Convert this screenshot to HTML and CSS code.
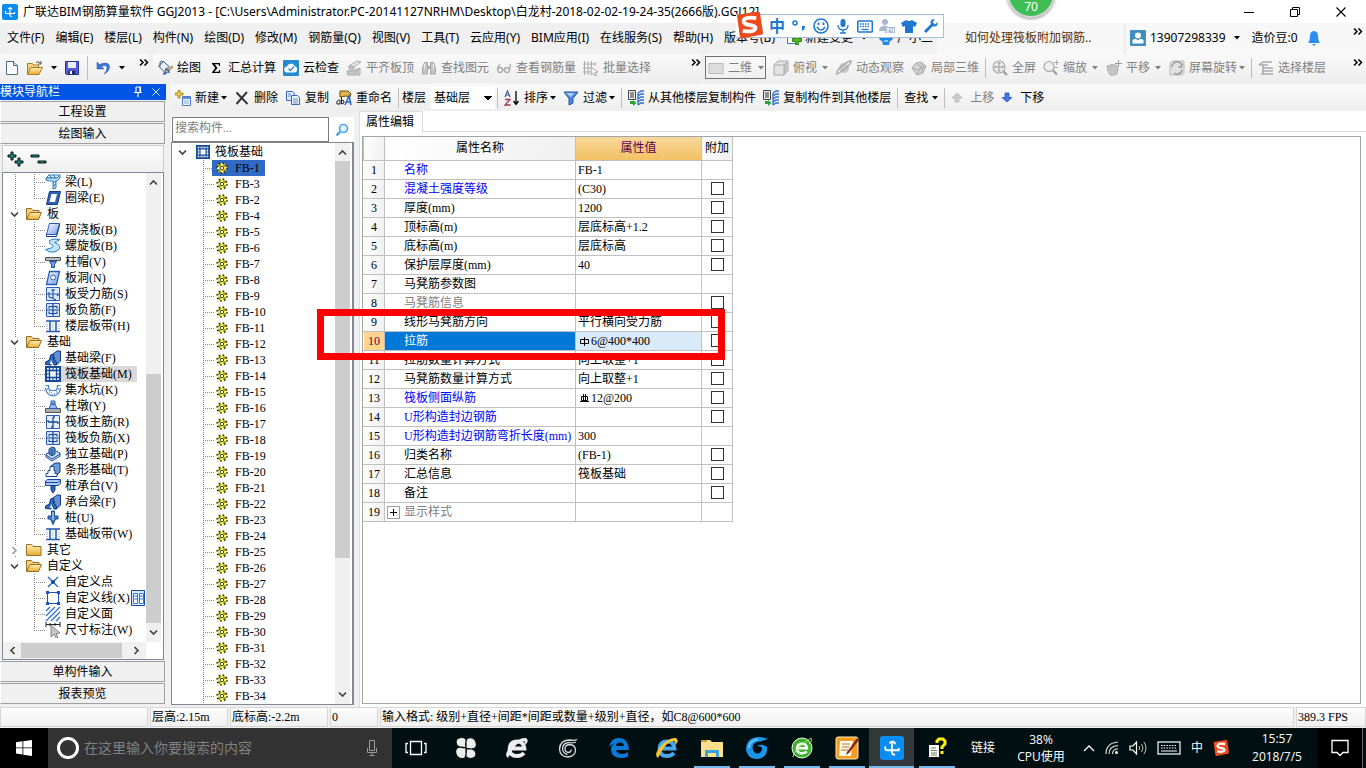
FILE: index.html
```html
<!DOCTYPE html>
<html lang="zh-CN">
<head>
<meta charset="utf-8">
<title>广联达BIM钢筋算量软件 GGJ2013</title>
<link rel="stylesheet" href="styles.css">
</head>
<body>
<svg class="defs" aria-hidden="true">
<defs>
<linearGradient id="gb" x1="0" y1="0" x2="1" y2="1"><stop offset="0" stop-color="#fff"/><stop offset="1" stop-color="#6d9df0"/></linearGradient>
<linearGradient id="gy" x1="0" y1="0" x2="0" y2="1"><stop offset="0" stop-color="#fff0b8"/><stop offset="1" stop-color="#e9ac2c"/></linearGradient>
</defs>
<symbol id="app" viewBox="0 0 16 16"><rect width="16" height="16" rx="2" fill="#0a8df2"/><path d="M6.500 5a1.800 1.800 0 0 1 3.500 .5M8 4v6M3.500 7v1.500q0 1 1.500 1h7.500V8M8 9.500V11q0 1.500 2 1.500" fill="none" stroke="#fff" stroke-width="1.200"/></symbol>
<symbol id="caret" viewBox="0 0 6 4"><path d="M0 0h6L3 3.500z" fill="currentColor"/></symbol>
<symbol id="more" viewBox="0 0 10 7"><path d="M1 .5l3 3-3 3M5.500 .5l3 3-3 3" fill="none" stroke="#000" stroke-width="1.500"/></symbol>
<symbol id="newdoc" viewBox="0 0 16 16"><path d="M2.500 1.500h7l4 4v9h-11z" fill="#fff" stroke="#4a6a9c"/><path d="M9.500 1.500v4h4" fill="#cfe0f5" stroke="#4a6a9c"/></symbol>
<symbol id="open" viewBox="0 0 16 16"><path d="M.5 14V3.500h5l1 1.500h5v3" fill="#f6d47c" stroke="#a77a22"/><path d="M.5 14.500l3-7h12l-3.500 7z" fill="url(#gy)" stroke="#a77a22"/><path d="M9 2.500q3-2 5 1m0-2.500v3h-3" fill="none" stroke="#555"/></symbol>
<symbol id="save" viewBox="0 0 16 16"><path d="M1.500 1.500h13v13h-12l-1-1z" fill="#5560d8" stroke="#2a2f8c"/><path d="M4 2h8v6H4z" fill="#e8ecff"/><path d="M4.500 10.500h7V14h-7z" fill="#23277c"/><path d="M6 11h2v3H6z" fill="#fff"/></symbol>
<symbol id="undo" viewBox="0 0 16 16"><path d="M2 2v7h7L6.500 6.500Q12 4 12 8q0 3-3 6 6-3 5.500-8Q13 1 4.500 4.500z" fill="#3e76d8" stroke="#2756ab" stroke-width=".5"/></symbol>
<symbol id="paint" viewBox="0 0 16 16"><path d="M1.500 6l5-4.500 5.500 5-5 5z" fill="#e9f0fb" stroke="#33557f"/><path d="M3 6.500V3q0-2 1.500-2T6 3" fill="none" stroke="#33557f"/><path d="M14.500 6l1.500 1-6 6-2-1z" fill="#f2b04a" stroke="#8c5a15" stroke-width=".6"/><path d="M6 15q0-3.500 2.500-3.500L10 13q-1 2-4 2z" fill="#2d6bc8"/><path d="M8 9q4 0 4 4" fill="none" stroke="#2d6bc8" stroke-width="1.500"/></symbol>
<symbol id="sigma" viewBox="0 0 16 16"><path d="M4 3h8v3h-.7L10.500 4.300H6.800L9.500 8l-3.300 3.700h4.500L11.500 10h.7v3H4v-.8L7.300 8 4 3.800z" fill="#000"/></symbol>
<symbol id="cloud" viewBox="0 0 16 16"><rect width="16" height="16" rx="1" fill="#2389d0"/><path d="M4.500 12.500a3 3 0 0 1-.5-6 4 4 0 0 1 7.500-.5 3.300 3.300 0 0 1 0 6.500z" fill="#fff"/><path d="M5.500 8.500l2 2 3.500-4" fill="none" stroke="#2389d0" stroke-width="1.300"/></symbol>
<symbol id="align" viewBox="0 0 16 16"><path d="M3 6l8-5 4 1-7 5z" fill="#e4e4e4" stroke="#aaa"/><path d="M3 6v3l3 2 2-4zM1 11h6l3-2v6H2z" fill="#c6c6c6" stroke="#aaa"/><path d="M11 15V9l3-1v7z" fill="#ccc" stroke="#aaa"/></symbol>
<symbol id="binoc" viewBox="0 0 16 16"><path d="M1.500 14V8l2-5.500h3V14zM14.500 14V8l-2-5.500h-3V14z" fill="#c4c4c4" stroke="#a5a5a5"/><path d="M6.500 6h3v3h-3z" fill="#aaa"/><path d="M3.500 4v5M12.500 4v5" stroke="#eee"/></symbol>
<symbol id="glasses" viewBox="0 0 16 16"><circle cx="4" cy="10" r="2.500" fill="#eee" stroke="#aaa" stroke-width="1.300"/><circle cx="11" cy="10" r="2.500" fill="#eee" stroke="#aaa" stroke-width="1.300"/><path d="M1.500 10Q1 7 4 4.500M13.500 10l1-6M6.500 10h2" fill="none" stroke="#aaa" stroke-width="1.300"/></symbol>
<symbol id="batch" viewBox="0 0 16 16"><path d="M1.500 1v14M5 1v14M8.500 1v7M0 4h12M0 8h8M0 12h9M12 2v4" stroke="#aaa" fill="none"/><path d="M8 7l7 5-3 .5 1.500 3-1.500.5-1.500-3L8 15z" fill="#f4f4f4" stroke="#999" stroke-width=".8"/></symbol>
<symbol id="plane" viewBox="0 0 16 16"><rect x="1" y="3.500" width="14" height="10" fill="#dcdcdc" stroke="#bbb"/></symbol>
<symbol id="cube" viewBox="0 0 16 16"><path d="M1 5l4-4h10v10l-4 4H1z" fill="#e2e2e2" stroke="#aaa"/><path d="M11 5l4-4v10l-4 4z" fill="#c4c4c4"/><path d="M1 5h10v10M11 5l4-4" fill="none" stroke="#aaa"/></symbol>
<symbol id="orbit" viewBox="0 0 16 16"><circle cx="8" cy="8" r="5" fill="#c9c9c9"/><path d="M1 14Q0 11 6 6t9-5q1 2-5 7t-9 6z" fill="none" stroke="#a8a8a8" stroke-width="1.500"/></symbol>
<symbol id="local" viewBox="0 0 16 16"><path d="M1 8l4-5 5-1 5 4-3 7-6 2z" fill="#d5d5d5" stroke="#aaa"/><path d="M5 3l5 4-4 8M1 8l6 2 8-4M10 2l2 5-2 7" fill="none" stroke="#aaa"/></symbol>
<symbol id="full" viewBox="0 0 16 16"><circle cx="7" cy="7" r="6" fill="#efefef" stroke="#aaa" stroke-width="1.200"/><path d="M7 2.500v9M2.500 7h9M5.500 4L7 2.500 8.500 4M5.500 10L7 11.500 8.500 10M4 5.500L2.500 7 4 8.500M10 5.500L11.500 7 10 8.500" fill="none" stroke="#999"/><path d="M11.500 11.500L15 15" stroke="#999" stroke-width="2.200"/></symbol>
<symbol id="zoomi" viewBox="0 0 16 16"><circle cx="6" cy="6.500" r="5" fill="#efefef" stroke="#aaa" stroke-width="1.200"/><path d="M10 10.500l4 4" stroke="#999" stroke-width="2.200"/><path d="M13.500 0v5M11 2.500h5M11 7.500h4" stroke="#aaa"/></symbol>
<symbol id="pan" viewBox="0 0 16 16"><path d="M1 6q1-1.500 3 1V5q1-1.500 2 0 1-1.500 2.500 0Q10 4 11 6l1 3-1 5q-4 2-7 1-3-4-3-9z" fill="#c4c4c4" stroke="#b0b0b0"/><path d="M12.500 0v7M9 3.500h7" stroke="#999"/></symbol>
<symbol id="rot" viewBox="0 0 16 16"><path d="M1 3l2-2h12v12l-2 2H1z" fill="#e2e2e2" stroke="#bbb"/><path d="M3 7a5 5 0 0 1 10-.5v-3M13 7h-3.500M13 10a5 5 0 0 1-8 3" fill="none" stroke="#999" stroke-width="1.500"/></symbol>
<symbol id="floors" viewBox="0 0 16 16"><path d="M1 5l4-3h9M1 5h9M4 8h11M4 11h11M3 14h12M5 5v9" stroke="#aaa" stroke-width="1.500" fill="none"/></symbol>
<symbol id="create" viewBox="0 0 16 16"><path d="M3 0h2v3h3v2H5v3H3V5H0V3h3z" fill="#f8d648" stroke="#8a6a10" stroke-width=".7"/><path d="M7.500 6.500h8v9h-8z" fill="#f2f7ff" stroke="#4b76c0"/><path d="M7.500 7h8v2h-8z" fill="#5c8ade"/><path d="M9 11h5M9 13h5" stroke="#89a9e0"/></symbol>
<symbol id="del" viewBox="0 0 16 16"><path d="M2.500 2.500l11 11.500M13 2L2.500 14" stroke="#333" stroke-width="1.900" fill="none"/></symbol>
<symbol id="copy" viewBox="0 0 16 16"><path d="M1.500 1.500h6l2 2v7h-8z" fill="#dce9ff" stroke="#3f68ba"/><path d="M6.500 5.500h6l2 2v7h-8z" fill="#e9f1ff" stroke="#3f68ba"/><path d="M8 9h5M8 11h5M8 13h5M3 4h3M3 6h3" stroke="#6e92da"/></symbol>
<symbol id="rename" viewBox="0 0 16 16"><path d="M4 1h8l3 3-1 3-4-1-6 1z" fill="#e5b54a" stroke="#6e5112"/><path d="M1 14q-1-4 3-4v4H1M5.500 7v7q3 0 2.500-3-1-1.500-2.500 0" fill="none" stroke="#222"/><path d="M9 15l4-9 2 9M10.500 12h4" fill="none" stroke="#2b62c9" stroke-width="1.500"/></symbol>
<symbol id="sort" viewBox="0 0 16 16"><path d="M1 7l2.500-6L6 7M2 5h3" fill="none" stroke="#3b5a96" stroke-width="1.200"/><path d="M1 9.500h5L1 15h5.500" fill="none" stroke="#a33a44" stroke-width="1.300"/><path d="M12 1v13M9.500 11l2.500 3.500 2.500-3.500" stroke="#000" fill="none" stroke-width="1.300"/></symbol>
<symbol id="filter" viewBox="0 0 16 16"><path d="M1 2h14L10 8.500V13l-4 2V8.500z" fill="#4d87e8" stroke="#2254a8"/><path d="M3 3h8L8 7z" fill="#b5d0fa"/></symbol>
<symbol id="fcopy" viewBox="0 0 16 16"><path d="M.5 .5h7v9h-7z" fill="#eee" stroke="#444"/><path d="M2 3h4M2 5h4M2 7h4" stroke="#333"/><path d="M10 3l3-2h3M10 6l3-2h3M10 9l3-2h3M10 12l3-2h3M10 15l3-2h3M10 3v12" stroke="#2f6ccf" stroke-width="1.300" fill="none"/><path d="M2 11v3h3v2l3.500-3L5 10v1z" fill="#26a53c"/></symbol>
<symbol id="up" viewBox="0 0 12 12"><path d="M6 1l5 5H8v4H4V6H1z" fill="#ccc" stroke="#aaa" stroke-width=".6"/></symbol>
<symbol id="down" viewBox="0 0 12 12"><path d="M6 10L1 5.500h3V1h4v4.500h3z" fill="#4377e6" stroke="#1d46a5" stroke-width=".7"/></symbol>
<symbol id="plusdoc" viewBox="0 0 16 16"><path d="M1.500 1.500h10v12h-10z" fill="#fff" stroke="#3f78b5"/><path d="M9.500 5.500h3v3h3v3h-3v3h-3v-3h-3v-3h3z" fill="#52b61e" stroke="#2f8010"/></symbol>
<symbol id="robot" viewBox="0 0 16 16"><rect x="1" y="2" width="14" height="9" rx="4" fill="#1b88e6"/><path d="M4 10h8l-1 5H5z" fill="#1b88e6"/><circle cx="5.500" cy="6.500" r="1.300" fill="#fff"/><circle cx="10.500" cy="6.500" r="1.300" fill="#fff"/><path d="M6 11h4" stroke="#fff"/></symbol>
<symbol id="avatar" viewBox="0 0 16 16"><rect width="16" height="16" rx="1" fill="#3d8fbf"/><circle cx="8" cy="5.500" r="3" fill="#fff"/><path d="M2.500 13.500V10q2-1.500 3.500-1l2 1.500L10 9q2-.5 3.500 1v3.500z" fill="#fff"/></symbol>
<symbol id="bell" viewBox="0 0 14 16"><path d="M7 1q4 .5 4 5 0 5 2 7H1q2-2 2-7 0-4.500 4-5z" fill="#2b8df5"/><path d="M5 14h4l-2 2z" fill="#2b8df5"/></symbol>
<symbol id="folder" viewBox="0 0 16 14"><path d="M.5 12.500v-11h5l1.500 2h8v9z" fill="url(#gy)" stroke="#96702a"/></symbol>
<symbol id="folderopen" viewBox="0 0 16 14"><path d="M.5 12V1.500h5l1.500 2h6v3" fill="#f5d27a" stroke="#96702a"/><path d="M.5 12.500l3.500-7h11.500l-3 7z" fill="url(#gy)" stroke="#96702a"/></symbol>
<symbol id="chev" viewBox="0 0 9 9"><path d="M1 2.500L4.500 6 8 2.500" fill="none" stroke="#444" stroke-width="1.700"/></symbol>
<symbol id="chevr" viewBox="0 0 9 9"><path d="M2.500 1L6 4.500 2.500 8" fill="none" stroke="#999" stroke-width="1.500"/></symbol>
<symbol id="beam" viewBox="0 0 16 16"><path d="M1 4l3-3h11l-3 3z" fill="#e7f2fd" stroke="#2a7ab8"/><path d="M1 4h11l3-3v3l-3 3h-1v7l-3 1V7H5L1 6z" fill="#bcdcf7" stroke="#2a7ab8"/><path d="M4 1l3 3M8 1l3 3M8 9l3-2M8 12l3-2" stroke="#2a7ab8"/></symbol>
<symbol id="ring" viewBox="0 0 16 16"><path d="M4.500 1.500h11l-3 13h-11z" fill="#2f60b5" stroke="#123c85"/><path d="M6.500 4h5.500l-2 8H4.500z" fill="#fff"/></symbol>
<symbol id="slab" viewBox="0 0 16 16"><path d="M4.500 1.500h10l-3 11h-10z" fill="url(#gb)" stroke="#2b5cae"/><path d="M1.500 12.500v2h10l3-11v-2" fill="none" stroke="#123c85"/></symbol>
<symbol id="spiral" viewBox="0 0 16 16"><path d="M15 1.500Q8 0 4.500 2.500 3 5 7 7q3 1.500-1 3L.5 11.500Q4 15 9 14q7-2 5.500-6-1-2-5-3.500 2-.5 5.500-3z" fill="#c4e5fb" stroke="#2781c9"/></symbol>
<symbol id="cap" viewBox="0 0 16 16"><path d="M.5 3.500h15v3H.5z" fill="#b9bec4" stroke="#555"/><path d="M4.500 7.500h7l-2 3v3h-3v-3z" fill="#6fa0e5" stroke="#1c4f9f"/></symbol>
<symbol id="hole" viewBox="0 0 16 16"><path d="M4.500 1.500h10l-3 13h-10z" fill="url(#gb)" stroke="#2b5cae" stroke-width="1.300"/><circle cx="8" cy="7.500" r="2.500" fill="#fff" stroke="#2b5cae"/></symbol>
<symbol id="rebar0" viewBox="0 0 16 16"><path d="M1.500 1.500h13v13h-13z" fill="#dfe9fb" stroke="#2b5cae"/><path d="M8 3v9q0 1.500 3 1.500M2 8h12M6 4h4M4 6v4q0 2 4 2M12 10l2-2" fill="none" stroke="#2b5cae" stroke-width="1.200"/></symbol>
<symbol id="rebar1" viewBox="0 0 16 16"><path d="M1.500 1.500h13v13h-13z" fill="#e5eefc" stroke="#2b5cae"/><path d="M8 3v10h-2M8 3h2M3 8h10M3 8v-2M13 8v2" fill="none" stroke="#174a96" stroke-width="1.300"/></symbol>
<symbol id="rebar2" viewBox="0 0 16 16"><path d="M1.500 1.500h13v13h-13z" fill="#d5e3fa" stroke="#2b5cae"/><path d="M8 1v13M4 4.500h8M4 11.500h8M2 8h12M4 4.500v2M12 4.500v2M4 9.500v2M12 9.500v2" fill="none" stroke="#174a96" stroke-width="1.200"/></symbol>
<symbol id="strip" viewBox="0 0 16 16"><path d="M1 3h14M1 13.500h14" stroke="#1c55b3" stroke-width="1.500"/><path d="M5 3v10M11 3v10" stroke="#1c55b3" stroke-width="1.500"/><path d="M2 6v6M8 5v7M14 6v6" stroke="#6e98d8" stroke-dasharray="1 1"/></symbol>
<symbol id="fbeam" viewBox="0 0 16 16"><path d="M8 4l4-3h3.500v10l-4 4z" fill="#5f8fd1" stroke="#123c85"/><path d="M.5 14.500v-2.500l4-2 1-5 3-1v6l3 2v3H9l-1.500-3-1.500 3z" fill="#2f69b8" stroke="#123c85"/><path d="M5 14l1-4 2 4" fill="#fff"/></symbol>
<symbol id="raft" viewBox="0 0 16 16"><path d="M1 1h14v14H1z" fill="#e9f1fc" stroke="#174a96" stroke-width="2"/><path d="M4.500 1v14M11.500 1v14M1 4.500h14M1 11.500h14" stroke="#174a96" stroke-width="1.300"/><path d="M8 1v3M8 12v3M1 8h3M12 8h3" stroke="#174a96"/><path d="M6 6h4v4H6z" fill="#fff"/></symbol>
<symbol id="pit" viewBox="0 0 16 16"><path d="M.5 3.500h3q0 5 2.500 5h4q2.500 0 2.500-5h3M.5 6q1 7 7.500 8 6.500-1 7.500-8" fill="none" stroke="#3d80cd" stroke-width="1.200"/><path d="M2 7h1M4 10h1M6 11h1M9 12h1M11 10h1M13 7h1M7 13h1" stroke="#174a96"/></symbol>
<symbol id="pier" viewBox="0 0 16 16"><path d="M.5 10.500h15v4H.5z" fill="#a8adb3" stroke="#555"/><path d="M6 6h4l2 4.500H4zM6 3h4v3H6z" fill="#96bcf0" stroke="#2b5cae"/></symbol>
<symbol id="iso" viewBox="0 0 16 16"><path d="M1 8l8-4 6 3v3l-8 5-6-4z" fill="#cfe1f7" stroke="#174a96"/><path d="M4 8V3l3-2 3 1v6l-3 2z" fill="#5686c4" stroke="#174a96"/><path d="M1 9l6 4 8-5M7 3v7" fill="none" stroke="#174a96"/></symbol>
<symbol id="stripf" viewBox="0 0 16 16"><path d="M6 4l4-3h5v9l-4 4z" fill="#6f9bd5" stroke="#123c85"/><path d="M1 14.500v-3h2v-3h2v-4h4v4h1v3h2v3z" fill="#fff" stroke="#174a96"/></symbol>
<symbol id="pilecap" viewBox="0 0 16 16"><path d="M.5 3l2-1.500h13v4L13 7.500H.5z" fill="#aacaf5" stroke="#174a96"/><path d="M6 8h4v4l-2 3-2-3z" fill="#2c69bd" stroke="#123c85"/><path d="M1 4.500h12l2-2" stroke="#174a96" fill="none"/></symbol>
<symbol id="pile" viewBox="0 0 16 16"><path d="M6.500 1h3v5h3.500v3h-2.500L8 14.500 5.500 9H3V6h3.500z" fill="#3f79c6" stroke="#174a96"/><path d="M8 2v8" stroke="#d5e5fa" stroke-width="1.200"/></symbol>
<symbol id="cpoint" viewBox="0 0 16 16"><path d="M3 3l10 10M13 3L3 13" stroke="#2268c4" stroke-width="1.300"/><circle cx="8" cy="8" r="2" fill="#174a96"/></symbol>
<symbol id="cline" viewBox="0 0 16 16"><path d="M2.500 2.500h11v11h-11z" fill="none" stroke="#1c55c3"/><path d="M1 1h3v3H1zM12 1h3v3h-3zM1 12h3v3H1zM12 12h3v3h-3z" fill="#1c55c3"/></symbol>
<symbol id="cface" viewBox="0 0 16 16"><path d="M1 5l4-4M1 10l9-9M1 15L15 1M6 15l9-9M11 15l4-4" stroke="#2f6cd0" stroke-width="1.200"/></symbol>
<symbol id="dim" viewBox="0 0 16 16"><path d="M1 0v5M15 0v5M1 2.500h14M5 1v3M10 1v3" stroke="#222"/><path d="M6 3l9 8-4 .5 2 4-2 .5-2-4-3 3z" fill="#c5c5c5" stroke="#888"/></symbol>
<symbol id="gear" viewBox="0 0 12 12"><circle cx="6" cy="6" r="5" fill="#fff94a" stroke="#222" stroke-width="1.400" stroke-dasharray="1.600 2.327"/><path d="M2 4h2v-2M8 2v2h2M10 8h-2v2M4 10v-2h-2" fill="none" stroke="#333" stroke-width=".8"/><circle cx="6" cy="6" r="1.700" fill="#fff" stroke="#222" stroke-width=".9"/></symbol>
<symbol id="mag" viewBox="0 0 14 14"><path d="M1.500 12.500L5 9" stroke="#3f9be0" stroke-width="2.400"/><circle cx="8.500" cy="5.500" r="4" fill="#e0f3fe" stroke="#4aaaea" stroke-width="1.700"/></symbol>
<symbol id="expand" viewBox="0 0 18 16"><path d="M4 1h2v3h3v2H6v3H4V6H1V4h3z" fill="#0e9a8c" stroke="#111"/><path d="M11 7h2v3h3v2h-3v3h-2v-3H8v-2h3z" fill="#0e9a8c" stroke="#111"/></symbol>
<symbol id="collapse" viewBox="0 0 18 16"><path d="M1 4h8v2H1zM8 10h8v2H8z" fill="#0e9a8c" stroke="#111"/></symbol>
<symbol id="pin" viewBox="0 0 10 12"><path d="M3 1h4.500v5M3 1v5M7 1v5M1 6.500h8M5 7v4" fill="none" stroke="#fff" stroke-width="1.200"/></symbol>
<symbol id="x" viewBox="0 0 10 10"><path d="M.5 .5l9 9M9.500 .5l-9 9" fill="none" stroke="currentColor" stroke-width="1.100"/></symbol>
<symbol id="sogou" viewBox="0 0 28 28"><path d="M1 4Q1 3 3 3L23 0q2 0 2 2l3 20q0 2-2 2L6 28q-2 0-2-2z" fill="#ee4a1d"/><path d="M21 7Q8 5 8 10q0 3 6 4 7 1 6 4-2 4-13 2" fill="none" stroke="#fff" stroke-width="4"/></symbol>
<symbol id="smile" viewBox="0 0 16 16"><circle cx="8" cy="8" r="7" fill="none" stroke="#1f78cf" stroke-width="1.600"/><path d="M4 9q4 6 8 0" fill="none" stroke="#1f78cf" stroke-width="1.500"/><path d="M5.500 4.500v2.500M10.500 4.500v2.500" stroke="#1f78cf" stroke-width="1.800"/></symbol>
<symbol id="mic" viewBox="0 0 16 16"><rect x="5.500" y="1" width="5" height="8" rx="2.500" fill="currentColor"/><path d="M3 7q0 5 5 5t5-5M8 12v3M5 15h6" fill="none" stroke="currentColor" stroke-width="1.300"/></symbol>
<symbol id="keys" viewBox="0 0 16 16"><rect x=".8" y="3" width="14.500" height="11" rx="1" fill="none" stroke="#1f78cf" stroke-width="1.600"/><path d="M3 6h10M3 8.500h10" stroke="#1f78cf" stroke-width="1.500" stroke-dasharray="1.500 1"/><path d="M4.500 11.500h7" stroke="#1f78cf" stroke-width="1.300"/></symbol>
<symbol id="person" viewBox="0 0 16 16"><circle cx="6" cy="4" r="3" fill="#a9b8d0"/><path d="M0 13q0-5 5.500-5.500Q8 7.500 9 9h7v6H6v-2z" fill="#a9b8d0"/><path d="M7.500 10.500H10V12H8v2h2.500M12 10v2.500h3M14.500 10v4.500" fill="none" stroke="#fff"/></symbol>
<symbol id="shirt" viewBox="0 0 16 16"><path d="M5 2q3 2 6 0l5 3-2 4-2-1v7H4V8L2 9 0 5z" fill="#1f78cf"/></symbol>
<symbol id="wrench" viewBox="0 0 16 16"><path d="M2 14l7-7" stroke="#1f78cf" stroke-width="3"/><path d="M14.500 4L12 6.500 9.500 4 12 1.500Q8 .5 7.500 4q0 4 3.500 4.500 4.500 0 3.500-4.500z" fill="#1f78cf"/></symbol>
<symbol id="win" viewBox="0 0 16 16"><path d="M0 2.300l6.500-1v6.200H0zM7.300 1.200L16 0v7.500H7.300zM0 8.300h6.500v6.200L0 13.500zM7.300 8.300H16V16l-8.700-1.300z" fill="#fff"/></symbol>
<symbol id="task" viewBox="0 0 22 16"><path d="M5.500 1.500h11v13h-11zM3 3.500H1v9h2M19 3.500h2v9h-2" fill="none" stroke="#fff" stroke-width="1.300"/></symbol>
<symbol id="fan" viewBox="0 0 24 24"><path d="M3 3q5-3 9 0v9Q5 12 3 9q-2-3 0-6zM21 4q-3-4-8-1.500-2 4-1 9.500 5 2 9 0 3-3 0-8zM21 21q-4 3-9 0v-8q7-1 9 2 2 3 0 6zM3 20q3 4 8 2 2-5 1-10-5-2-9 0-3 3 0 8z" fill="#eee" stroke="#031012" stroke-width="1.200"/></symbol>
<symbol id="e" viewBox="0 0 24 24"><path d="M4.500 12.500h15Q19 5.500 12 5.500T4.500 13q0 7 7.500 7 4.500 0 7-3" fill="none" stroke="currentColor" stroke-width="3.800"/></symbol>
<symbol id="swoosh" viewBox="0 0 24 24"><path d="M3 22Q-2 19 6 10T21 2q4 3-1 7Q21 3 15 6T3 22z" fill="currentColor"/></symbol>
<symbol id="g1" viewBox="0 0 24 24"><path d="M21 3.500q-3 1.500-7 .5Q4 4 3.500 13q.5 7.500 8 8 8-.5 8-7-.5-5.500-6-5.500-5 .5-4.500 5 .5 3 3.500 3 3-.5 2.500-3M20 6q-4 1.500-7 .5Q6.500 7 6.500 13q.5 4.500 5 5.500" fill="none" stroke="#ddd" stroke-width="1.300"/></symbol>
<symbol id="edge" viewBox="0 0 24 24"><path d="M2 11Q4 2 12 2q9 0 10 12H9q1 4 6 4 4 0 6-2v4.500q-3 1.500-7 1.500-9 0-10-8 0-5 4-7-3 1-6 4zm7-1h8q0-3.500-4-3.500T9 10z" fill="#0b79da"/></symbol>
<symbol id="files" viewBox="0 0 24 24"><path d="M1 4h9l2 2h11v15H1z" fill="#ffe08a"/><path d="M1 4h6v2H1z" fill="#d6a03a"/><path d="M5 21v-7h14v7h-3v-4H8v4z" fill="#37a4e0"/></symbol>
<symbol id="g2" viewBox="0 0 24 24"><path d="M23 3q-4-2-8-2Q1 1 1 14q2 9 11 9 11-1 10-12-5-4-10-1 6 0 5 4-3 6-8 2-4-7 3-10 6-1 11-3z" fill="#1b96ea"/><path d="M4 12Q4 5 13 3" fill="none" stroke="#6fd0ff" stroke-width="1.500"/></symbol>
<symbol id="note" viewBox="0 0 24 24"><rect x="1" y="1" width="22" height="22" rx="2" fill="#f59b22" stroke="#fff0bb"/><path d="M5 5h13l-2 15H4z" fill="#fffbe8"/><path d="M7 8h8M7 11h7M6 14h7" stroke="#b66f2a"/><path d="M22 2L12 16l-1 3 3-2L24 4z" fill="#852b1d"/></symbol>
<symbol id="help" viewBox="0 0 24 24"><path d="M4 9h10v12H4z" fill="#fff"/><path d="M6 12h5M6 14.500h6M6 17h6M6 19h6" stroke="#777"/><path d="M12 7V5l2-2h4l2 2v3l-3 3v2M17 15v3" fill="none" stroke="#111" stroke-width="4.500"/><path d="M12 7V5l2-2h4l2 2v3l-3 3v2M17 15v3" fill="none" stroke="#fdf300" stroke-width="3"/></symbol>
<symbol id="wifi" viewBox="0 0 14 14"><path d="M1 13Q1 2 13 1M4 13q0-8 9-8.500M7.500 13q0-5 5.500-5" fill="none" stroke="#ddd" stroke-width="1.200"/><circle cx="11.500" cy="11.500" r="1.500" fill="#fff"/></symbol>
<symbol id="vol" viewBox="0 0 18 14"><path d="M1 5h3l3.500-4v12L4 9H1z" fill="none" stroke="#fff" stroke-width="1.200"/><path d="M10 5q1.500 2 0 4M12.500 3q3 4 0 8M15 1q4 6 0 12" fill="none" stroke="#bbb"/></symbol>
<symbol id="kb" viewBox="0 0 24 14"><rect x="1" y="1" width="22" height="12" fill="none" stroke="#fff" stroke-width="1.200"/><path d="M4 4.500h16M4 7h16" stroke="#fff" stroke-dasharray="1.500 1.200"/><path d="M4 10h16" stroke="#fff"/></symbol>
<symbol id="msg" viewBox="0 0 18 18"><path d="M1 1.500h16v12h-5l-3 3-3-3H1z" fill="none" stroke="#fff" stroke-width="1.300"/></symbol>
<symbol id="book" viewBox="0 0 14 16"><path d="M.5 .5h13v15H.5z" fill="#d7e9fb" stroke="#174a96"/><path d="M2.500 3.500h4v10h-4zM8.500 3.500h4v10h-4z" fill="#fff" stroke="#2781d9"/><path d="M3 6h3M9 6h3M3 9h3M9 9h3" stroke="#2781d9"/></symbol>
</svg>

<header class="title">
  <svg class="i16"><use href="#app"/></svg>
  <h1>广联达BIM钢筋算量软件 GGJ2013 - [C:\Users\Administrator.PC-20141127NRHM\Desktop\白龙村-2018-02-02-19-24-35(2666版).GGJ12]</h1>
  <div class="winbtns">
    <button aria-label="最小化"><svg width="10" height="10"><path d="M0 5.500h10" stroke="#000"/></svg></button>
    <button aria-label="还原"><svg width="10" height="10"><path d="M.5 2.500h7v7h-7zM2.500 2.500v-2h7v7h-2" fill="none" stroke="#000"/></svg></button>
    <button aria-label="关闭"><svg width="10" height="10"><use href="#x"/></svg></button>
  </div>
</header>

<nav class="menubar">
  <div class="menu">
    <button>文件(F)</button><button>编辑(E)</button><button>楼层(L)</button><button>构件(N)</button><button>绘图(D)</button><button>修改(M)</button><button>钢筋量(Q)</button><button>视图(V)</button><button>工具(T)</button><button>云应用(Y)</button><button>BIM应用(I)</button><button>在线服务(S)</button><button>帮助(H)</button><button>版本号(B)</button>
    <button><svg class="i16"><use href="#plusdoc"/></svg>新建变更 <svg class="caret"><use href="#caret"/></svg></button><button><svg class="i16"><use href="#robot"/></svg>广小二</button>
  </div>
  <a class="tip" href="#">如何处理筏板附加钢筋..</a>
  <div class="account">
    <button><svg class="i16"><use href="#avatar"/></svg>13907298339 <svg class="caret"><use href="#caret"/></svg></button>
    <button>造价豆:0</button>
    <button aria-label="通知"><svg class="i16"><use href="#bell"/></svg></button>
    <svg class="more"><use href="#more"/></svg>
  </div>
</nav>

<div class="tools">
  <div class="group file">
    <button aria-label="新建"><svg class="i16"><use href="#newdoc"/></svg></button>
    <button aria-label="打开"><svg class="i16"><use href="#open"/></svg><svg class="caret"><use href="#caret"/></svg></button>
    <button aria-label="保存"><svg class="i16"><use href="#save"/></svg></button>
    <i class="sep"></i>
    <button aria-label="撤销"><svg class="i16"><use href="#undo"/></svg><svg class="caret"><use href="#caret"/></svg></button>
    <svg class="more"><use href="#more"/></svg>
  </div>
  <div class="group draw">
    <button><svg class="i16"><use href="#paint"/></svg>绘图</button>
    <button><svg class="i16"><use href="#sigma"/></svg>汇总计算</button>
    <button><svg class="i16"><use href="#cloud"/></svg>云检查</button>
    <button disabled><svg class="i16"><use href="#align"/></svg>平齐板顶</button>
    <button disabled><svg class="i16"><use href="#binoc"/></svg>查找图元</button>
    <button disabled><svg class="i16"><use href="#glasses"/></svg>查看钢筋量</button>
    <button disabled><svg class="i16"><use href="#batch"/></svg>批量选择</button>
    <svg class="more"><use href="#more"/></svg>
  </div>
  <div class="group view">
    <button class="mode" disabled><svg class="i16"><use href="#plane"/></svg>二维<svg class="caret"><use href="#caret"/></svg></button>
    <button disabled><svg class="i16"><use href="#cube"/></svg>俯视<svg class="caret wide"><use href="#caret"/></svg></button>
    <button disabled><svg class="i16"><use href="#orbit"/></svg>动态观察</button>
    <button disabled><svg class="i16"><use href="#local"/></svg>局部三维</button>
    <i class="sep"></i>
    <button disabled><svg class="i16"><use href="#full"/></svg>全屏</button>
    <button disabled><svg class="i16"><use href="#zoomi"/></svg>缩放<svg class="caret wide"><use href="#caret"/></svg></button>
    <button disabled><svg class="i16"><use href="#pan"/></svg>平移<svg class="caret wide"><use href="#caret"/></svg></button>
    <button disabled><svg class="i16"><use href="#rot"/></svg>屏幕旋转<svg class="caret tight"><use href="#caret"/></svg></button>
    <i class="sep"></i>
    <button disabled><svg class="i16"><use href="#floors"/></svg>选择楼层</button>
    <svg class="more"><use href="#more"/></svg>
  </div>
</div>

<main>
  <aside class="nav song">
    <div class="navtitle"><h2>模块导航栏</h2><button aria-label="固定"><svg width="10" height="12"><use href="#pin"/></svg></button><button aria-label="关闭"><svg width="8" height="8"><use href="#x"/></svg></button></div>
    <button class="section">工程设置</button>
    <button class="section">绘图输入</button>
    <div class="treetools"><button aria-label="展开"><svg width="18" height="16"><use href="#expand"/></svg></button><button aria-label="折叠"><svg width="18" height="16"><use href="#collapse"/></svg></button></div>
    <div class="treebox">
      <div class="treerow">
        <ul class="tree">
          <li><ul>
            <li class="leaf"><svg><use href="#beam"/></svg>梁(L)</li>
            <li class="leaf"><svg><use href="#ring"/></svg>圈梁(E)</li>
          </ul></li>
          <li><div class="branch"><svg class="chev"><use href="#chev"/></svg><svg><use href="#folderopen"/></svg>板</div><ul>
            <li class="leaf"><svg><use href="#slab"/></svg>现浇板(B)</li>
            <li class="leaf"><svg><use href="#spiral"/></svg>螺旋板(B)</li>
            <li class="leaf"><svg><use href="#cap"/></svg>柱帽(V)</li>
            <li class="leaf"><svg><use href="#hole"/></svg>板洞(N)</li>
            <li class="leaf"><svg><use href="#rebar0"/></svg>板受力筋(S)</li>
            <li class="leaf"><svg><use href="#rebar2"/></svg>板负筋(F)</li>
            <li class="leaf"><svg><use href="#strip"/></svg>楼层板带(H)</li>
          </ul></li>
          <li><div class="branch"><svg class="chev"><use href="#chev"/></svg><svg><use href="#folderopen"/></svg>基础</div><ul>
            <li class="leaf"><svg><use href="#fbeam"/></svg>基础梁(F)</li>
            <li class="leaf"><span class="current"><svg><use href="#raft"/></svg>筏板基础(M)</span></li>
            <li class="leaf"><svg><use href="#pit"/></svg>集水坑(K)</li>
            <li class="leaf"><svg><use href="#pier"/></svg>柱墩(Y)</li>
            <li class="leaf"><svg><use href="#rebar1"/></svg>筏板主筋(R)</li>
            <li class="leaf"><svg><use href="#rebar2"/></svg>筏板负筋(X)</li>
            <li class="leaf"><svg><use href="#iso"/></svg>独立基础(P)</li>
            <li class="leaf"><svg><use href="#stripf"/></svg>条形基础(T)</li>
            <li class="leaf"><svg><use href="#pilecap"/></svg>桩承台(V)</li>
            <li class="leaf"><svg><use href="#fbeam"/></svg>承台梁(F)</li>
            <li class="leaf"><svg><use href="#pile"/></svg>桩(U)</li>
            <li class="leaf"><svg><use href="#strip"/></svg>基础板带(W)</li>
          </ul></li>
          <li><div class="branch"><svg class="chev"><use href="#chevr"/></svg><svg><use href="#folder"/></svg>其它</div></li>
          <li class="end"><div class="branch"><svg class="chev"><use href="#chev"/></svg><svg><use href="#folderopen"/></svg>自定义</div><ul>
            <li class="leaf"><svg><use href="#cpoint"/></svg>自定义点</li>
            <li class="leaf"><svg><use href="#cline"/></svg>自定义线(X)<svg class="book"><use href="#book"/></svg></li>
            <li class="leaf"><svg><use href="#cface"/></svg>自定义面</li>
            <li class="leaf"><svg><use href="#dim"/></svg>尺寸标注(W)</li>
          </ul></li>
        </ul>
        <div class="vbar low"><svg class="chev flip"><use href="#chev"/></svg><i></i><svg class="chev"><use href="#chev"/></svg></div>
      </div>
      <div class="hbar"><svg class="chev left"><use href="#chev"/></svg><i></i><svg class="chev right"><use href="#chev"/></svg></div>
    </div>
    <button class="section">单构件输入</button>
    <button class="section">报表预览</button>
  </aside>

  <section class="work">
    <div class="tools2">
      <button><svg class="i16"><use href="#create"/></svg>新建<svg class="caret tight"><use href="#caret"/></svg></button>
      <button><svg class="i16"><use href="#del"/></svg>删除</button>
      <button><svg class="i16"><use href="#copy"/></svg>复制</button>
      <button><svg class="i16"><use href="#rename"/></svg>重命名</button>
      <i class="sep"></i>
      <label for="floor">楼层</label>
      <select id="floor"><option>基础层</option></select>
      <i class="sep"></i>
      <button><svg class="i16"><use href="#sort"/></svg>排序<svg class="caret tight"><use href="#caret"/></svg></button>
      <button><svg class="i16"><use href="#filter"/></svg>过滤<svg class="caret tight"><use href="#caret"/></svg></button>
      <i class="sep"></i>
      <button><svg class="i16"><use href="#fcopy"/></svg>从其他楼层复制构件</button>
      <button><svg class="i16"><use href="#fcopy"/></svg>复制构件到其他楼层</button>
      <i class="sep"></i>
      <button>查找<svg class="caret"><use href="#caret"/></svg></button>
      <i class="sep"></i>
      <button class="move" disabled><svg class="i12"><use href="#up"/></svg>上移</button>
      <button class="move"><svg class="i12"><use href="#down"/></svg>下移</button>
    </div>
    <div class="panes">
      <div class="parts song">
        <div class="search"><input type="text" aria-label="搜索构件" placeholder="搜索构件..."><button aria-label="搜索"><svg width="14" height="14"><use href="#mag"/></svg></button></div>
        <div class="partbox">
          <div class="partlist">
            <div class="root"><svg class="chev"><use href="#chev"/></svg><svg><use href="#raft"/></svg>筏板基础</div>
            <ul>
              <li class="leaf"><span class="picked"><svg><use href="#gear"/></svg>FB-1</span></li>
              <li class="leaf"><svg><use href="#gear"/></svg>FB-3</li>
              <li class="leaf"><svg><use href="#gear"/></svg>FB-2</li>
              <li class="leaf"><svg><use href="#gear"/></svg>FB-4</li>
              <li class="leaf"><svg><use href="#gear"/></svg>FB-5</li>
              <li class="leaf"><svg><use href="#gear"/></svg>FB-6</li>
              <li class="leaf"><svg><use href="#gear"/></svg>FB-7</li>
              <li class="leaf"><svg><use href="#gear"/></svg>FB-8</li>
              <li class="leaf"><svg><use href="#gear"/></svg>FB-9</li>
              <li class="leaf"><svg><use href="#gear"/></svg>FB-10</li>
              <li class="leaf"><svg><use href="#gear"/></svg>FB-11</li>
              <li class="leaf"><svg><use href="#gear"/></svg>FB-12</li>
              <li class="leaf"><svg><use href="#gear"/></svg>FB-13</li>
              <li class="leaf"><svg><use href="#gear"/></svg>FB-14</li>
              <li class="leaf"><svg><use href="#gear"/></svg>FB-15</li>
              <li class="leaf"><svg><use href="#gear"/></svg>FB-16</li>
              <li class="leaf"><svg><use href="#gear"/></svg>FB-17</li>
              <li class="leaf"><svg><use href="#gear"/></svg>FB-18</li>
              <li class="leaf"><svg><use href="#gear"/></svg>FB-19</li>
              <li class="leaf"><svg><use href="#gear"/></svg>FB-20</li>
              <li class="leaf"><svg><use href="#gear"/></svg>FB-21</li>
              <li class="leaf"><svg><use href="#gear"/></svg>FB-22</li>
              <li class="leaf"><svg><use href="#gear"/></svg>FB-23</li>
              <li class="leaf"><svg><use href="#gear"/></svg>FB-24</li>
              <li class="leaf"><svg><use href="#gear"/></svg>FB-25</li>
              <li class="leaf"><svg><use href="#gear"/></svg>FB-26</li>
              <li class="leaf"><svg><use href="#gear"/></svg>FB-27</li>
              <li class="leaf"><svg><use href="#gear"/></svg>FB-28</li>
              <li class="leaf"><svg><use href="#gear"/></svg>FB-29</li>
              <li class="leaf"><svg><use href="#gear"/></svg>FB-30</li>
              <li class="leaf"><svg><use href="#gear"/></svg>FB-31</li>
              <li class="leaf"><svg><use href="#gear"/></svg>FB-32</li>
              <li class="leaf"><svg><use href="#gear"/></svg>FB-33</li>
              <li class="leaf"><svg><use href="#gear"/></svg>FB-34</li>
            </ul>
          </div>
          <div class="vbar top"><svg class="chev flip"><use href="#chev"/></svg><i></i><svg class="chev"><use href="#chev"/></svg></div>
        </div>
      </div>
      <div class="props song">
        <div class="tabs"><button class="tab">属性编辑</button></div>
        <div class="sheet"><div class="inner">
          <table>
            <colgroup><col class="c1"><col class="c2"><col class="c3"><col class="c4"></colgroup>
            <thead><tr><th></th><th>属性名称</th><th class="hot">属性值</th><th>附加</th></tr></thead>
            <tbody>
              <tr><th>1</th><td class="blue">名称</td><td>FB-1</td><td></td></tr>
              <tr><th>2</th><td class="blue">混凝土强度等级</td><td>(C30)</td><td><input type="checkbox" aria-label="附加 混凝土强度等级"></td></tr>
              <tr><th>3</th><td>厚度(mm)</td><td>1200</td><td><input type="checkbox" aria-label="附加 厚度"></td></tr>
              <tr><th>4</th><td>顶标高(m)</td><td>层底标高+1.2</td><td><input type="checkbox" aria-label="附加 顶标高"></td></tr>
              <tr><th>5</th><td>底标高(m)</td><td>层底标高</td><td><input type="checkbox" aria-label="附加 底标高"></td></tr>
              <tr><th>6</th><td>保护层厚度(mm)</td><td>40</td><td><input type="checkbox" aria-label="附加 保护层厚度"></td></tr>
              <tr><th>7</th><td>马凳筋参数图</td><td></td><td></td></tr>
              <tr><th>8</th><td class="gray">马凳筋信息</td><td></td><td><input type="checkbox" aria-label="附加 马凳筋信息"></td></tr>
              <tr><th>9</th><td>线形马凳筋方向</td><td>平行横向受力筋</td><td><input type="checkbox" aria-label="附加 线形马凳筋方向"></td></tr>
              <tr class="active"><th>10</th><td>拉筋</td><td><svg class="bar"><path d="M1.500 3.500h8v4h-8zM5.500 1v9" fill="none" stroke="#000"/></svg>6@400*400</td><td><input type="checkbox" aria-label="附加 拉筋"></td></tr>
              <tr><th>11</th><td>拉筋数量计算方式</td><td>向上取整+1</td><td><input type="checkbox" aria-label="附加 拉筋数量计算方式"></td></tr>
              <tr><th>12</th><td>马凳筋数量计算方式</td><td>向上取整+1</td><td><input type="checkbox" aria-label="附加 马凳筋数量计算方式"></td></tr>
              <tr><th>13</th><td class="blue">筏板侧面纵筋</td><td><svg class="bar"><path d="M2.500 3.500h6v4h-6zM4.500 1v8M6.500 1v8M1 8.500h9" fill="none" stroke="#000"/></svg>12@200</td><td><input type="checkbox" aria-label="附加 筏板侧面纵筋"></td></tr>
              <tr><th>14</th><td class="blue">U形构造封边钢筋</td><td></td><td><input type="checkbox" aria-label="附加 U形构造封边钢筋"></td></tr>
              <tr><th>15</th><td class="blue">U形构造封边钢筋弯折长度(mm)</td><td>300</td><td></td></tr>
              <tr><th>16</th><td>归类名称</td><td>(FB-1)</td><td><input type="checkbox" aria-label="附加 归类名称"></td></tr>
              <tr><th>17</th><td>汇总信息</td><td>筏板基础</td><td><input type="checkbox" aria-label="附加 汇总信息"></td></tr>
              <tr><th>18</th><td>备注</td><td></td><td><input type="checkbox" aria-label="附加 备注"></td></tr>
              <tr><th>19</th><td class="gray fold"><button aria-label="展开显示样式"><svg width="11" height="11"><path d="M2 5.500h7M5.500 2v7" stroke="#000"/></svg></button>显示样式</td><td></td><td></td></tr>
            </tbody>
          </table>
        </div></div>
      </div>
    </div>
  </section>
</main>

<footer class="status song">
  <span class="s1"></span><span class="s2">层高:2.15m</span><span class="s3">底标高:-2.2m</span><span class="s4">0</span><span class="s5">输入格式: 级别+直径+间距*间距或数量+级别+直径，如C8@600*600</span><span class="s6">389.3 FPS</span>
</footer>

<div class="taskbar">
  <button class="start" aria-label="开始"><svg width="16" height="16"><use href="#win"/></svg></button>
  <div class="cortana"><i class="ringi"></i><input type="text" aria-label="搜索" placeholder="在这里输入你要搜索的内容"><svg class="i16" viewBox="0 0 16 16"><path d="M5.500 .5h5v10h-5zM3.500 8v4.500h9V8M8 12v3M5.500 15.500h5" fill="none" stroke="#999"/></svg></div>
  <div class="apps">
    <button class="tv" aria-label="任务视图"><svg><use href="#task"/></svg></button>
    <button aria-label="风扇"><svg><use href="#fan"/></svg></button>
    <button class="white" aria-label="浏览器"><svg><use href="#e"/><use href="#swoosh"/></svg></button>
    <button aria-label="G"><svg><use href="#g1"/></svg></button>
    <button aria-label="Edge"><svg><use href="#edge"/></svg></button>
    <button class="run off ie" aria-label="IE"><svg><use href="#e"/><use class="gold" href="#swoosh"/></svg></button>
    <button class="run" aria-label="文件"><svg><use href="#files"/></svg></button>
    <button class="run" aria-label="G+"><svg><use href="#g2"/></svg></button>
    <button class="run" aria-label="安全浏览器"><svg viewBox="0 0 24 24"><circle cx="12" cy="12" r="10" fill="#3eb02f" stroke="#e8ffe0"/><use class="in" href="#e" x="4" y="4" width="16" height="16"/><path d="M3 21Q3 14 21 2q2 3-2 6" fill="none" stroke="#9fe86f"/></svg></button>
    <button class="run" aria-label="便笺"><svg><use href="#note"/></svg></button>
    <button class="run on" aria-label="GGJ2013"><svg><use href="#app"/></svg></button>
    <button class="run" aria-label="帮助"><svg><use href="#help"/></svg></button>
  </div>
  <span class="link">链接</span>
  <span class="cpu">38%<br>CPU使用</span>
  <div class="tray">
    <svg width="12" height="8"><path d="M1 7l5-5 5 5" fill="none" stroke="#fff" stroke-width="1.300"/></svg>
    <svg width="14" height="14"><use href="#wifi"/></svg>
    <svg width="18" height="14"><use href="#vol"/></svg>
    <svg width="24" height="14"><use href="#kb"/></svg>
    <span>中</span>
    <svg width="16" height="16"><use href="#sogou"/></svg>
  </div>
  <time>15:57<br>2018/7/5</time>
  <button class="notice" aria-label="通知中心"><svg width="18" height="18"><use href="#msg"/></svg></button>
</div>

<div class="mark"></div>
<div class="ball">70</div>
<div class="ime">
  <svg class="logo"><use href="#sogou"/></svg><b>中</b><svg viewBox="0 0 16 16"><circle cx="4" cy="5" r="2" fill="none" stroke="#1f78cf" stroke-width="1.500"/><path d="M11 8h3q0 4-3 5z" fill="#1f78cf"/></svg><svg><use href="#smile"/></svg><svg><use href="#mic"/></svg><svg><use href="#keys"/></svg><svg><use href="#person"/></svg><svg><use href="#shirt"/></svg><svg><use href="#wrench"/></svg>
</div>
</body>
</html>
```
FILE: styles.css
```css
* { box-sizing: border-box; }
html, body { height: 100%; }
body {
  margin: 0;
  display: flex;
  flex-direction: column;
  overflow: hidden;
  background: #f0f0f0;
  color: #000;
  font: 12px/16px "Noto Sans", "Noto Sans CJK SC", sans-serif;
}
.defs { position: absolute; width: 0; height: 0; }
button, input, select { font: inherit; color: inherit; margin: 0; }
button {
  display: inline-flex;
  align-items: center;
  gap: 4px;
  padding: 0;
  border: 0;
  background: none;
  white-space: nowrap;
}
button:disabled { color: #808080; }
svg { flex: none; }
ul { list-style: none; margin: 0; padding: 0; }
.i16 { width: 16px; height: 16px; }
.i12 { width: 12px; height: 12px; }
.caret { width: 6px; height: 4px; }
.tight { margin-left: -2px; }
.more { width: 10px; height: 7px; margin-left: auto; align-self: flex-start; margin-top: 5px; }
.sep { width: 1px; height: 20px; background: #bdbdbd; flex: none; }
.song { font-family: "Liberation Serif", "Noto Sans CJK SC", serif; }

.title { display: flex; align-items: center; gap: 5px; height: 23px; padding-left: 2px; background: #fff; flex: none; }
.title h1 { margin: 0; font-size: 12px; font-weight: 400; flex: 1; white-space: nowrap; }
.winbtns { display: flex; padding-right: 2px; }
.winbtns button { width: 46px; height: 22px; justify-content: center; }

.menubar { display: flex; height: 31px; flex: none; }
.menu { display: flex; gap: 1px; width: 937px; padding: 0 0 2px 2px; overflow: hidden; }
.menu button { padding: 0 5px; gap: 3px; }
.menu .caret { margin-left: 5px; }
.tip { flex: 1; display: flex; align-items: center; padding: 0 0 2px 28px; margin-right: 3px; background: #f7f7f7; color: #5a2d00; text-decoration: none; white-space: nowrap; }
.account { display: flex; align-items: center; gap: 8px; width: 240px; padding: 0 3px 2px 4px; background: #f7f7f7; }
.account .caret { margin: 0 4px; }

.tools { display: flex; gap: 4px; height: 29px; flex: none; }
.group { display: flex; align-items: center; gap: 7px; padding: 0 0 2px 4px; background: linear-gradient(#fafafa, #ededed); border-radius: 3px; }
.file { width: 149px; }
.file .caret { margin-left: 4px; }
.file .sep { height: 24px; }
.draw { width: 548px; }
.view { flex: 1; padding-left: 0; padding-right: 3px; }
.mode { width: 61px; height: 23px; padding-left: 2px; border: 1px solid #707070; }
.mode .caret { margin-left: 2px; }
.wide { margin: 0 1px; }
.view .sep { margin: 0 -1px; }

main { flex: 1; display: flex; gap: 5px; min-height: 0; padding-top: 1px; }
.nav { width: 166px; display: flex; flex-direction: column; gap: 1px; padding-bottom: 3px; flex: none; }
.navtitle { display: flex; align-items: center; gap: 9px; height: 16px; padding-right: 6px; background: #0055e5; color: #fff; }
.navtitle h2 { margin: 0; flex: 1; font-size: 12px; line-height: 16px; font-weight: 400; }
.section { height: 21px; justify-content: center; margin: 0 1px 0 0; border: 1px solid #a0a0a0; border-left-color: #fff; background: #f0f0f0; flex: none; }
.treetools { display: flex; align-items: center; gap: 5px; height: 26px; margin: 0 2px; padding-left: 4px; background: linear-gradient(#fdfdfd, #efefef); border: 1px solid #ccc; border-bottom: 0; flex: none; }
.treebox { flex: 1; min-height: 0; display: flex; flex-direction: column; margin: 0 2px; border: 1px solid #828790; background: #fff; }
.treerow { flex: 1; display: flex; min-height: 0; }
.tree { flex: 1; overflow: hidden; padding-top: 1px; }
.tree > li { background: repeating-linear-gradient(#888 0 1px, transparent 1px 2px) 12px 0 / 1px 100% no-repeat; }
.tree > li.end { background: none; }
.branch { display: flex; align-items: center; height: 16px; padding-left: 7px; white-space: nowrap; }
.branch svg { width: 16px; height: 14px; margin-right: 5px; }
.branch .chev { width: 9px; height: 9px; margin-right: 7px; background: #fff; }
.leaf { display: flex; align-items: center; height: 16px; white-space: nowrap; }
.leaf svg { width: 16px; height: 16px; margin-right: 4px; }
.leaf::before {
  content: "";
  width: 11px;
  height: 16px;
  flex: none;
  background:
    repeating-linear-gradient(#888 0 1px, transparent 1px 2px) 0 0 / 1px 100% no-repeat,
    repeating-linear-gradient(90deg, #888 0 1px, transparent 1px 2px) 0 8px / 100% 1px no-repeat;
}
.tree .leaf { padding-left: 31px; }
.tree .leaf:last-child::before { background-size: 1px 50%, 100% 1px; }
.leaf .book { width: 14px; margin: 0 0 0 1px; }
.current { display: flex; align-items: center; padding-right: 5px; background: #d9d9d9; }
.vbar { width: 15px; margin-right: 2px; display: flex; flex-direction: column; align-items: center; background: #f0f0f0; padding: 5px 0; }
.vbar i { width: 15px; background: #cdcdcd; }
.chev { width: 9px; height: 9px; }
.flip { transform: rotate(180deg); }
.left { transform: rotate(90deg); }
.right { transform: rotate(-90deg); }
.low i { flex: 250; margin: 187px 0 5px; }
.hbar { display: flex; align-items: center; height: 17px; margin-right: 17px; padding: 0 5px; background: #f0f0f0; flex: none; }
.hbar i { flex: 1; height: 15px; margin: 0 10px 0 4px; background: #cdcdcd; }

.work { flex: 1; display: flex; flex-direction: column; min-width: 0; }
.tools2 { display: flex; align-items: center; gap: 7px; height: 27px; padding-left: 4px; background: linear-gradient(#fafafa, #ededed); border-radius: 3px; flex: none; }
.tools2 .sep { margin: 0 -1px; }
.tools2 label { margin-left: -3px; }
.tools2 select {
  width: 64px;
  height: 22px;
  padding: 0 3px;
  margin: 0 -4px 0 -2px;
  border: 0;
  appearance: none;
  background:
    linear-gradient(45deg, transparent 50%, #000 50%) 53px 9px / 4px 4px no-repeat,
    linear-gradient(-45deg, transparent 50%, #000 50%) 57px 9px / 4px 4px no-repeat,
    #fff;
}
.tools2 .move { gap: 7px; }
.panes { flex: 1; display: flex; gap: 4px; min-height: 0; }
.parts { width: 183px; display: flex; flex-direction: column; padding: 6px 0 2px; flex: none; margin-right: 1px; }
.search { display: flex; height: 25px; flex: none; background: #fff; }
.search input { width: 157px; height: 25px; margin-left: 1px; padding: 0 0 3px 2px; border: 1px solid #7a7a7a; background: #fff; outline: 0; }
.search input::placeholder, .cortana input::placeholder { color: #808080; opacity: 1; }
.search button { flex: 1; justify-content: center; }
.partbox { flex: 1; min-height: 0; display: flex; border: 1px solid #828790; border-right-width: 2px; background: #fff; }
.partlist { flex: 1; overflow: hidden; padding-top: 1px; }
.root { display: flex; align-items: center; height: 16px; padding-left: 6px; }
.root svg { width: 14px; height: 14px; margin-right: 5px; }
.root .chev { width: 9px; height: 9px; margin-right: 9px; }
.partlist .leaf { padding-left: 31px; }
.partlist .leaf svg { width: 12px; height: 12px; margin: 0 7px 0 2px; }
.picked { display: flex; align-items: center; height: 16px; margin-left: -2px; padding: 0 5px 0 2px; background: #316ac5; }
.top i { flex: 397; margin-top: 4px; margin-bottom: 132px; }

.props { flex: 1; display: flex; flex-direction: column; min-width: 0; padding-bottom: 2px; background: #fff; border-left: 1px solid #dcdcdc; }
.tabs { height: 21px; display: flex; border-bottom: 1px solid #dcdcdc; flex: none; }
.tab { padding: 0 8px 0 6px; background: #fff; border-right: 1px solid #dcdcdc; border-top: 1px solid #dcdcdc; height: 21px; }
.sheet { flex: 1; min-height: 0; padding: 4px 5px 1px 2px; }
.inner { height: 100%; border: 1px solid #a0a5a5; overflow: hidden; }
table { border-collapse: collapse; table-layout: fixed; width: 369px; }
.c1 { width: 21px; }
.c2 { width: 191px; }
.c3 { width: 126px; }
.c4 { width: 31px; }
tr { height: 19px; }
thead tr { height: 23px; }
th, td { padding: 0; border: 1px solid #c0c0c0; font-weight: 400; line-height: 16px; white-space: nowrap; overflow: hidden; }
th { background: linear-gradient(100deg, #fff, #efefef); border-left-color: #fff; }
thead th { border-top: 0; border-left-color: #c0c0c0; }
thead .hot { background: linear-gradient(#f9d79b, #f2c162); color: #5a0050; }
td:nth-child(2) { padding-left: 19px; }
td:nth-child(3) { padding-left: 2px; }
td:nth-child(4) { text-align: center; }
td input { appearance: none; display: block; width: 13px; height: 13px; margin: 0 auto; border: 1px solid #333; background: #fff; }
.blue { color: #0000ff; }
.gray { color: #808080; }
td.fold { padding-left: 2px; }
.fold button { width: 13px; height: 13px; justify-content: center; margin-right: 4px; border: 1px solid #a0a0a0; vertical-align: middle; }
.active th { background: #ffd58d; color: #5a0050; }
.active td:nth-child(2) { background: #0078d7; color: #fff; }
.active td:nth-child(3) { background: #d9eaf9; }
.bar { width: 11px; height: 11px; margin: 0 1px; vertical-align: middle; }

.status { display: flex; gap: 2px; height: 21px; padding-bottom: 1px; flex: none; }
.status span { padding-left: 1px; line-height: 18px; border: 1px solid #d5d5d5; background: linear-gradient(#fdfdfd, #f0f0f0); white-space: nowrap; }
.s1 { width: 148px; }
.s2 { width: 78px; }
.s3 { width: 98px; }
.s4 { width: 48px; }
.s5 { flex: 1; }
.s6 { width: 70px; }

.taskbar { display: flex; height: 40px; flex: none; background: #000f12; color: #fff; font-family: "Open Sans", "Noto Sans CJK SC", sans-serif; }
.start { width: 48px; justify-content: center; background: #000; }
.cortana { display: flex; align-items: center; gap: 5px; width: 344px; padding: 0 12px 0 9px; background: #333; }
.ringi { width: 22px; height: 22px; border: 3px solid #fff; border-radius: 50%; }
.cortana input { flex: 1; min-width: 0; border: 0; padding: 0; background: none; font-size: 14px; outline: 0; }
.apps { display: flex; }
.apps button { width: 51px; height: 40px; justify-content: center; }
.apps .tv { width: 48px; }
.apps svg { width: 24px; height: 24px; }
.apps .tv svg { width: 22px; height: 16px; }
.apps .run { width: 45px; background: linear-gradient(#76b9ed, #76b9ed) center bottom / 36px 2px no-repeat; }
.apps .off { background: none; }
.apps .on { background: linear-gradient(#76b9ed, #76b9ed) center bottom / 100% 2px no-repeat #33393b; }
.white { color: #eee; }
.ie { color: #48a8ee; }
.gold { color: #f7c62f; }
.in { color: #fff; }
.link { width: 48px; text-align: center; line-height: 40px; }
.cpu { width: 68px; text-align: center; line-height: 17px; padding-top: 3px; }
.tray { display: flex; align-items: center; gap: 10px; padding-left: 8px; flex: 1; }
time { width: 80px; text-align: center; line-height: 18px; padding-top: 2px; }
.notice { width: 46px; justify-content: center; background: #000; border-right: 1px solid #666; margin-right: 3px; }

.mark { position: absolute; left: 317px; top: 309px; width: 408px; height: 51px; border: 7px solid #f00; }
.ball { position: absolute; left: 1007px; top: -30px; width: 48px; height: 48px; padding-top: 29px; border: 2px solid #d5d5d5; border-radius: 50%; background: #41bd55; color: #fff; text-align: center; line-height: 12px; box-shadow: 0 1px 3px #999; }
.ime { position: absolute; left: 736px; top: 14px; display: flex; align-items: center; gap: 6px; height: 24px; padding-right: 4px; border: 1px solid #a8bdd8; border-left: 0; background: #fff; color: #1f78cf; }
.ime svg { width: 16px; height: 16px; }
.ime .logo { width: 27px; height: 28px; margin-top: -3px; }
.ime b { font-size: 16px; line-height: 20px; }
```
